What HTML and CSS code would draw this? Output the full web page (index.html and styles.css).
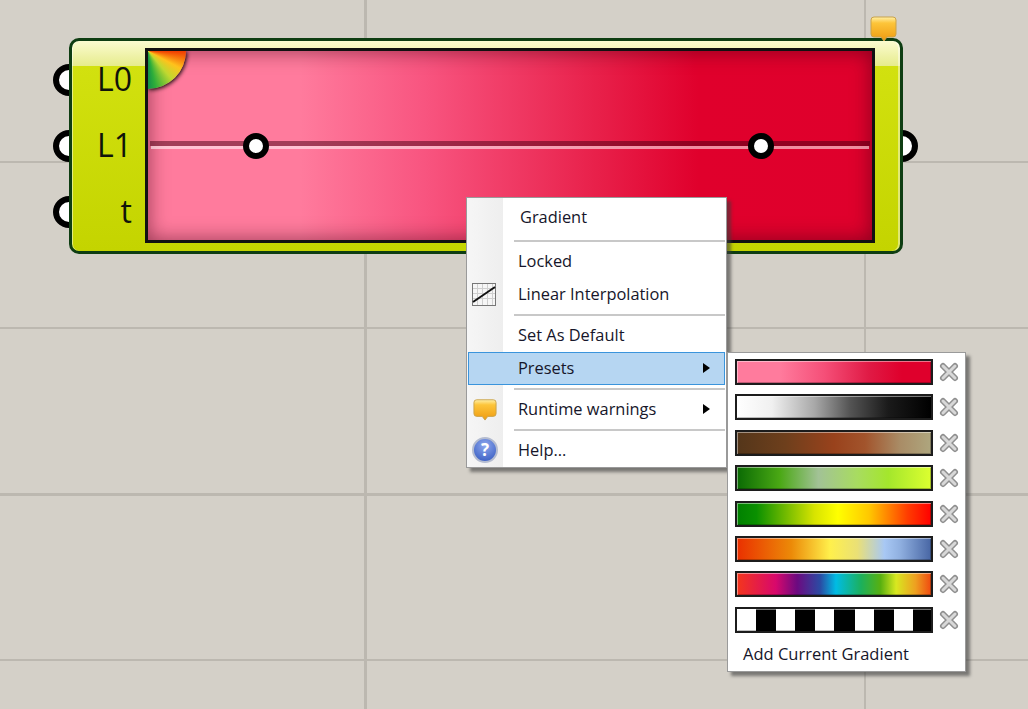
FILE: index.html
```html
<!DOCTYPE html>
<html lang="en">
<head>
  <meta charset="UTF-8" />
  <title>Gradient</title>
  <link rel="stylesheet" href="styles.css">
</head>
<body>
  <div class="canvas">

    <div class="node">
      <span class="port port-l0"></span>
      <span class="port port-l1"></span>
      <span class="port port-t"></span>
      <span class="port port-out"></span>

      <div class="node-body">
        <div class="node-inputs">
          <span>L0</span>
          <span>L1</span>
          <span>t</span>
        </div>
        <div class="display">
          <span class="wheel"></span>
          <span class="track"></span>
          <span class="grip grip-a"></span>
          <span class="grip grip-b"></span>
        </div>
      </div>

      <svg class="node-warning" width="28" height="28" viewBox="0 0 28 28">
        <defs>
          <linearGradient id="bal" x1="0" y1="0" x2="0" y2="1">
            <stop offset="0" stop-color="#fff0a8"/>
            <stop offset="0.25" stop-color="#fdc53a"/>
            <stop offset="1" stop-color="#ee9a10"/>
          </linearGradient>
        </defs>
        <path d="M4 1h19a3 3 0 0 1 3 3v14a3 3 0 0 1-3 3h-6l-3 4-3-4H4a3 3 0 0 1-3-3V4a3 3 0 0 1 3-3z" fill="url(#bal)" stroke="#c9a24a"/>
      </svg>
    </div>

    <div class="menu">
      <div class="menu-side"></div>
      <div class="menu-row menu-title"><span class="menu-label">Gradient</span></div>
      <div class="menu-sep"></div>
      <div class="menu-row"><span class="menu-label">Locked</span></div>
      <div class="menu-row">
        <svg class="menu-icon icon-linear" width="26" height="26" viewBox="0 0 26 26">
          <rect x="1.5" y="2.5" width="23" height="22" fill="#f6f6f6" stroke="#777"/>
          <path d="M2 7.5h22M2 12.5h22M2 17.5h22M6.5 3v21M11.5 3v21M16.5 3v21M21.5 3v21" stroke="#cfcfcf" stroke-width="1"/>
          <path d="M2 21L24 6" stroke="#111" stroke-width="2"/>
        </svg>
        <span class="menu-label">Linear Interpolation</span>
      </div>
      <div class="menu-sep"></div>
      <div class="menu-row"><span class="menu-label">Set As Default</span></div>
      <div class="menu-row active"><span class="menu-label">Presets</span><span class="arrow"></span></div>
      <div class="menu-sep"></div>
      <div class="menu-row">
        <svg class="menu-icon icon-warning" width="24" height="24" viewBox="0 0 26 26">
          <path d="M4 3h18a3 3 0 0 1 3 3v12a3 3 0 0 1-3 3h-6l-3 4-3-4H4a3 3 0 0 1-3-3V6a3 3 0 0 1 3-3z" fill="url(#bal)" stroke="#c9a24a"/>
        </svg>
        <span class="menu-label">Runtime warnings</span><span class="arrow"></span>
      </div>
      <div class="menu-sep"></div>
      <div class="menu-row">
        <span class="menu-icon help">?</span>
        <span class="menu-label">Help...</span>
      </div>
    </div>

    <div class="presets">
      <div class="preset"><span class="swatch g-pink"></span><svg class="remove" viewBox="0 0 22 22"><use href="#x"/></svg></div>
      <div class="preset"><span class="swatch g-grey"></span><svg class="remove" viewBox="0 0 22 22"><use href="#x"/></svg></div>
      <div class="preset"><span class="swatch g-earth"></span><svg class="remove" viewBox="0 0 22 22"><use href="#x"/></svg></div>
      <div class="preset"><span class="swatch g-lime"></span><svg class="remove" viewBox="0 0 22 22"><use href="#x"/></svg></div>
      <div class="preset"><span class="swatch g-traffic"></span><svg class="remove" viewBox="0 0 22 22"><use href="#x"/></svg></div>
      <div class="preset"><span class="swatch g-heat"></span><svg class="remove" viewBox="0 0 22 22"><use href="#x"/></svg></div>
      <div class="preset"><span class="swatch g-rainbow"></span><svg class="remove" viewBox="0 0 22 22"><use href="#x"/></svg></div>
      <div class="preset"><span class="swatch g-stripes"></span><svg class="remove" viewBox="0 0 22 22"><use href="#x"/></svg></div>
      <div class="add-current">Add Current Gradient</div>
    </div>

    <svg width="0" height="0" class="defs">
      <g id="x">
        <path d="M5 5L17 17M17 5L5 17" stroke="#8f8f8f" stroke-width="6" stroke-linecap="round"/>
        <path d="M5 5L17 17M17 5L5 17" stroke="#d8d8d8" stroke-width="3" stroke-linecap="round"/>
      </g>
    </svg>

  </div>
</body>
</html>
```

FILE: styles.css
```css
:root {
  --canvas: #d4d0c8;
  --grid: #bcb8b0;
  --node-edge: #0e3d12;
  --menu-text: #16162a;
  --menu-line: #c8c8c8;
  --ui-font: "Open Sans", "Noto Sans", sans-serif;
}
html, body {
  margin: 0;
  padding: 0;
  height: 100%;
}
body {
  overflow: hidden;
  font-family: var(--ui-font);
}
.canvas {
  position: relative;
  width: 1028px;
  height: 709px;
  overflow: hidden;
  background-color: var(--canvas);
  background-image:
    linear-gradient(to right, transparent 364px, var(--grid) 364px, var(--grid) 367px, transparent 367px, transparent 864px, var(--grid) 864px, var(--grid) 866px, transparent 866px),
    linear-gradient(to bottom, transparent 161px, var(--grid) 161px, var(--grid) 163px, transparent 163px, transparent 327px, var(--grid) 327px, var(--grid) 329px, transparent 329px, transparent 493px, var(--grid) 493px, var(--grid) 496px, transparent 496px, transparent 659px, var(--grid) 659px, var(--grid) 661px, transparent 661px);
}

/* component on the canvas */
.node {
  position: absolute;
  left: 69px;
  top: 38px;
  width: 834px;
  height: 216px;
}
.node-body {
  position: relative;
  box-sizing: border-box;
  display: flex;
  width: 100%;
  height: 100%;
  padding: 7px 25px 8px 0;
  border: 3px solid var(--node-edge);
  border-radius: 10px;
  background: linear-gradient(to bottom, #fbfbd0 0, #e6ec8c 25px, #d2e10f 25px, #c4d400 100%);
  box-shadow: inset 1px 0 0 rgba(255,255,255,.5), inset -2px 0 0 rgba(255,255,255,.45);
}
.node-inputs {
  box-sizing: border-box;
  display: flex;
  flex-direction: column;
  width: 73px;
  flex-shrink: 0;
  margin-top: -2px;
  padding-right: 13px;
  text-align: right;
  font-size: 32px;
  line-height: 66px;
  color: #10140a;
}
.display {
  position: relative;
  flex: 1;
  border: 3px solid #111;
  background: linear-gradient(to right, #ff7b9d 0, #ff7b9d 21%, #f85580 38%, #e8204a 62%, #e0002c 76%, #df002c 100%);
  box-shadow: inset 0 0 20px rgba(60,0,20,.55);
  overflow: hidden;
}
.wheel {
  position: absolute;
  left: 0;
  top: 0;
  width: 38px;
  height: 38px;
  border-bottom-right-radius: 38px;
  background: conic-gradient(from 90deg at 0 0, #f03a00 0deg, #ffc21c 28deg, #c0d830 50deg, #2fae3a 78deg, #12904a 90deg);
  box-shadow: 1px 1px 4px #000;
}
.track {
  position: absolute;
  left: 2px;
  right: 2px;
  top: 90px;
  height: 5px;
  background: rgba(70,0,20,.5);
  box-shadow: 0 4px 0 -1px rgba(255,255,255,.55);
}
.grip {
  position: absolute;
  top: 82px;
  box-sizing: border-box;
  width: 26px;
  height: 26px;
  border: 6px solid #000;
  border-radius: 50%;
  background: #fff;
}
.grip-a { left: 95px; }
.grip-b { left: 600px; }

.port {
  position: absolute;
  box-sizing: border-box;
  width: 32px;
  height: 32px;
  border: 6px solid #000;
  border-radius: 50%;
  background: #fff;
}
.port-l0 { left: -16px; top: 26px; }
.port-l1 { left: -16px; top: 92px; }
.port-t { left: -16px; top: 158px; }
.port-out { right: -15px; top: 92px; }
.node-warning {
  position: absolute;
  right: 5px;
  top: -22px;
}

/* context menu */
.menu {
  position: absolute;
  left: 466px;
  top: 197px;
  box-sizing: border-box;
  width: 261px;
  height: 271px;
  border: 1px solid #9a9a9a;
  background: #fff;
  box-shadow: 4px 4px 3px rgba(60,60,60,.6);
  color: var(--menu-text);
  font-size: 16.4px;
}
.menu-side {
  position: absolute;
  left: 0;
  top: 0;
  bottom: 0;
  width: 36px;
  background: linear-gradient(to right, #f6f6f6, #eeeeee);
}
.menu-row {
  position: relative;
  box-sizing: border-box;
  display: flex;
  align-items: center;
  height: 33px;
  margin-left: 1px;
  margin-right: 1px;
  padding-left: 50px;
}
.menu-label {
  margin-top: -2px;
}
.menu-title {
  height: 39px;
  padding-left: 52px;
}
.menu-sep {
  position: relative;
  height: 2px;
  margin: 3px 1px 3px 47px;
  background: var(--menu-line);
}
.active {
  background: #b6d6f2;
  outline: 1px solid #3a94dc;
  outline-offset: -1px;
}
.menu-icon {
  position: absolute;
  left: 4px;
  top: 3px;
}
.icon-linear {
  left: 3px;
}
.icon-warning {
  left: 5px;
  top: 4px;
}
.help {
  box-sizing: border-box;
  width: 26px;
  height: 26px;
  border: 2px solid #b4bcd0;
  border-radius: 50%;
  background: radial-gradient(circle at 50% 30%, #8ea8ee, #2f55bd);
  color: #fff;
  font-size: 17px;
  font-weight: 700;
  line-height: 21px;
  text-align: center;
}
.arrow {
  position: absolute;
  right: 15px;
  top: 11px;
  border-left: 7px solid #000;
  border-top: 5px solid transparent;
  border-bottom: 5px solid transparent;
}

/* presets submenu */
.presets {
  position: absolute;
  left: 727px;
  top: 352px;
  box-sizing: border-box;
  display: flex;
  flex-direction: column;
  width: 239px;
  height: 320px;
  padding: 6px 0 0 7px;
  border: 1px solid #9a9a9a;
  background: #fff;
  box-shadow: 4px 4px 3px rgba(60,60,60,.6);
}
.preset {
  display: flex;
  align-items: center;
  gap: 5px;
  height: 26px;
  margin-bottom: 9.4px;
}
.swatch {
  box-sizing: border-box;
  width: 198px;
  height: 26px;
  border: 2px solid #1c1c1c;
  box-shadow: inset 1px 1px 0 rgba(255,255,255,.45), inset -1px -1px 0 rgba(0,0,0,.25);
}
.remove {
  width: 22px;
  height: 22px;
  filter: blur(.5px);
}
.defs {
  position: absolute;
}
.add-current {
  margin: 0 0 0 8px;
  color: var(--menu-text);
  font-size: 16.5px;
}
.g-pink { background: linear-gradient(to right, #ff7b9d 0, #ff7b9d 22%, #f54f78 45%, #e01a45 68%, #df002c 85%, #df002c 100%); }
.g-grey { background: linear-gradient(to right, #fff 0, #f0f0f0 18%, #a8a8a8 40%, #555 58%, #1a1a1a 78%, #000 100%); }
.g-earth { background: linear-gradient(to right, #54361a 0, #6e3f1c 25%, #99421c 50%, #a2542c 66%, #a98c66 84%, #aea67e 100%); }
.g-lime { background: linear-gradient(to right, #0a6a04 0, #4aa814 22%, #a2c296 42%, #a8dc60 62%, #a4e62c 78%, #dcff30 100%); }
.g-traffic { background: linear-gradient(to right, #008000 0, #0a9000 10%, #d8e400 40%, #ffff00 52%, #ffc800 68%, #ff3c00 88%, #ff0000 100%); }
.g-heat { background: linear-gradient(to right, #ea3000 0, #ec8a08 28%, #fff04c 48%, #eae076 62%, #a8c8f4 76%, #90b0e0 84%, #4866a4 100%); }
.g-rainbow { background: linear-gradient(to right, #f4361c 0, #d8086c 20%, #6c0a80 31%, #2a4ca4 43%, #00bce4 51%, #1cb05c 64%, #58b010 74%, #d8e820 82%, #eea020 92%, #f04a10 100%); }
.g-stripes { background: repeating-linear-gradient(to right, #fff 0, #fff 19px, #000 19px, #000 39.2px); }
```
